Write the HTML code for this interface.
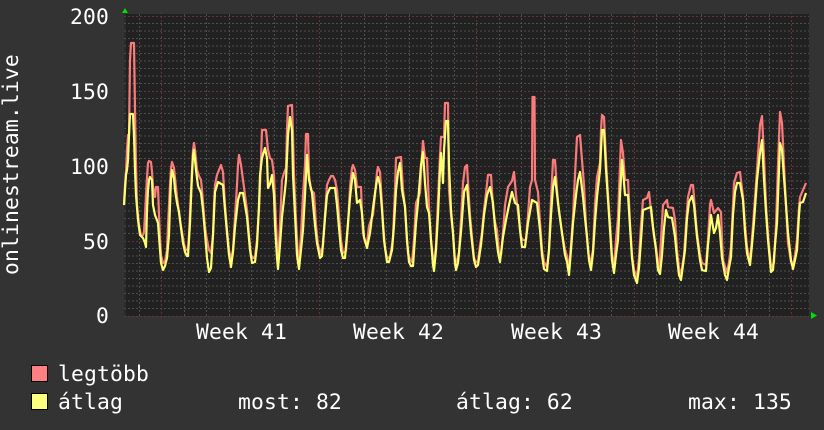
<!DOCTYPE html>
<html><head><meta charset="utf-8"><style>
html,body{margin:0;padding:0;background:#333;width:824px;height:430px;overflow:hidden}
svg{display:block}
text{font-family:"DejaVu Sans Mono","Liberation Mono",monospace;font-size:21.33px;fill:#fff;letter-spacing:.15px}
</style></head><body>
<svg width="824" height="430" viewBox="0 0 824 430" xmlns="http://www.w3.org/2000/svg">
<rect width="824" height="430" fill="#333"/>
<rect x="124" y="14" width="685" height="302" fill="#212121"/>
<rect x="124" y="14" width="2" height="302" fill="#2b2b2b"/>
<g stroke="#4e4e4e" stroke-width="1" stroke-dasharray="2 2" fill="none" shape-rendering="crispEdges">
<path d="M124 23.5H809M124 31H809M124 38.5H809M124 46H809M124 53.5H809M124 61H809M124 68.5H809M124 76H809M124 83.5H809M124 98.5H809M124 106H809M124 113.5H809M124 121H809M124 128.5H809M124 136H809M124 143.5H809M124 151H809M124 158.5H809M124 173.5H809M124 181H809M124 188.5H809M124 196H809M124 203.5H809M124 211H809M124 218.5H809M124 226H809M124 233.5H809M124 248.5H809M124 256H809M124 263.5H809M124 271H809M124 278.5H809M124 286H809M124 293.5H809M124 301H809M124 308.5H809"/>
<path d="M139.5 14V316M184.5 14V316M206.5 14V316M229.5 14V316M251.5 14V316M274.5 14V316M296.5 14V316M341.5 14V316M364.5 14V316M386.5 14V316M409.5 14V316M431.5 14V316M454.5 14V316M499.5 14V316M521.5 14V316M544.5 14V316M566.5 14V316M589.5 14V316M611.5 14V316M656.5 14V316M679.5 14V316M701.5 14V316M724.5 14V316M746.5 14V316M769.5 14V316"/>
</g>
<g stroke="#603636" stroke-width="1" stroke-dasharray="2 2" fill="none" shape-rendering="crispEdges">
<path d="M124 16.5H809M124 91.5H809M124 166.5H809M124 241.5H809M124 316.5H809"/>
<path d="M161.5 12V320M319.5 12V320M476.5 12V320M634.5 12V320M791.5 12V320"/>
</g>
<polyline fill="none" stroke="#f97b7b" stroke-width="2.2" stroke-linejoin="round" points="124,205 125,185 126,172 127,150 128,135 129,135 130,60 131,43 134,43 135,110 136,165 137,205 139,225 141,236 143,235 144,232 145,215 146,195 147,178 148,163 149,161 151,162 152,172 153,187 154,192 155,197 156,187 158,187 159,215 160,238 161,255 163,263 165,262 167,250 168,225 170,185 171,168 172,162 174,168 175,178 177,197 178,205 180,220 182,232 184,244 186,250 188,250 189,235 190,213 192,170 193,150 194,143 195,150 197,170 199,176 201,180 202,190 204,215 205,227 207,240 209,250 211,253 213,235 214,205 215,185 217,175 219,170 221,165 223,172 225,205 227,230 229,250 231,260 233,250 235,217 237,185 238,165 239,155 241,165 243,180 245,195 247,210 249,235 251,255 253,258 255,257 257,240 259,210 261,160 262,130 266,130 268,150 270,158 272,160 274,175 275,200 277,245 278,263 280,225 282,180 284,173 286,168 287,130 288,106 292,105 293,135 294,175 296,220 298,258 299,263 301,235 303,195 305,165 306,134 308,134 309,175 311,190 314,193 316,225 318,245 321,254 323,245 325,215 327,185 329,180 331,176 333,176 335,180 337,190 339,215 341,240 343,253 346,251 348,225 350,187 352,168 353,165 355,170 357,187 361,187 362,215 363,233 365,242 367,243 369,226 371,220 373,215 375,195 377,172 378,167 380,172 382,205 383,223 385,248 387,258 390,257 392,245 393,237 395,190 396,158 401,157 403,190 405,207 407,240 408,253 410,260 412,262 414,240 416,203 420,193 422,155 423,141 425,158 427,158 429,207 431,240 434,267 436,245 438,200 440,155 441,137 444,137 445,103 448,103 449,190 451,215 453,233 455,265 457,260 459,253 461,220 463,183 465,167 467,165 468,183 470,215 472,237 474,258 476,262 478,262 480,245 482,233 484,210 486,193 488,175 491,175 493,207 495,222 497,230 499,253 501,255 503,233 505,205 508,187 512,181 514,172 516,195 518,212 521,237 523,240 526,240 528,215 530,187 532,180 532.5,97 534.5,97 535,180 538,192 540,222 542,250 544,262 547,267 549,250 551,200 553,160 555,160 557,190 559,212 562,233 565,250 567,256 569,270 571,245 573,217 575,175 577,137 580,135 582,160 584,185 586,225 588,250 590,265 593,250 595,205 597,177 600,163 601,130 602,115 604,117 606,160 608,195 610,223 612,255 614,267 616,240 618,217 620,165 621,140 623,153 625,180 628,180 630,223 632,255 634,270 637,277 639,258 641,225 643,200 647,198 649,192 652,220 654,236 656,247 659,272 661,240 663,205 667,200 668,207 673,208 675,220 677,250 679,268 681,275 684,255 686,225 688,197 691,185 693,185 695,210 697,233 700,255 702,263 706,265 708,240 710,205 711,200 714,213 718,208 721,212 722,240 723,260 727,273 729,262 731,247 733,205 734,183 737,173 740,172 743,197 745,225 747,247 750,262 752,238 754,212 757,170 760,125 762,116 764,157 766,205 768,235 771,267 774,263 776,225 778,165 780,112 782,123 784,165 786,205 788,243 791,262 793,267 795,255 797,240 799,208 800,197 803,190 806,183"/>
<polyline fill="none" stroke="#ffff72" stroke-width="2.2" stroke-linejoin="round" points="124,205 125,190 126,175 127,170 128,160 129,135 130,114 133,114 134,135 135,170 136,195 138,220 140,235 143,238 145,243 146,247 147,210 148,190 149,180 150,177 152,180 153,205 155,215 158,223 160,250 161,263 163,270 165,266 167,258 169,235 170,205 171,180 172,170 174,178 175,190 177,203 179,212 181,228 183,243 185,252 187,256 188,256 190,223 192,175 193,155 194,150 196,170 198,186 201,193 203,210 205,233 207,258 209,272 211,268 213,235 215,192 218,182 223,185 225,210 227,233 229,255 231,267 233,252 235,227 238,200 240,193 243,193 245,205 247,217 250,250 252,263 255,262 257,245 259,205 260,175 262,158 265,148 267,158 268,188 270,184 272,175 274,195 275,225 277,258 278,269 280,245 282,217 285,190 286,180 288,135 290,117 292,130 293,175 295,215 297,255 299,269 301,250 303,230 305,195 307,155 309,180 312,193 315,225 317,243 320,258 322,256 325,218 327,195 330,188 335,188 337,205 339,228 341,250 343,258 345,258 348,223 350,198 352,180 353,173 355,180 357,203 360,200 362,213 364,237 367,248 370,233 373,208 375,193 377,180 378,177 380,185 382,210 384,240 387,262 389,262 392,250 394,225 396,190 398,172 400,163 402,190 405,207 407,240 409,262 411,266 413,266 416,223 418,203 421,165 423,152 425,183 427,207 429,213 431,240 433,265 434,271 436,250 438,215 440,170 441,153 443,183 444,150 446,121 448,121 449,165 451,210 453,233 455,262 456,270 458,263 461,232 464,192 467,185 469,210 471,233 474,260 476,267 478,265 481,245 484,215 487,195 490,187 493,203 495,227 498,252 500,262 503,237 506,220 509,205 512,192 515,203 518,205 520,230 522,247 525,247 528,223 532,200 537,203 540,230 542,255 544,269 547,271 549,250 551,215 553,187 555,177 558,203 562,233 565,255 567,262 569,275 571,250 573,223 576,195 578,180 580,172 583,197 585,218 587,237 589,260 591,270 593,253 595,222 597,197 600,170 601,150 602,130 604,130 606,170 608,200 610,230 612,260 614,273 616,255 618,240 620,195 622,160 623,170 625,195 628,195 630,227 632,258 634,275 637,283 639,268 641,240 643,210 651,207 653,227 656,250 658,270 660,274 662,255 664,228 666,210 668,217 672,218 675,237 677,258 679,275 681,280 683,265 685,250 687,218 689,202 692,196 694,205 697,237 700,260 702,270 706,271 708,245 711,215 714,233 716,228 718,215 720,233 722,258 725,275 727,280 729,268 731,257 733,215 735,192 737,183 740,183 743,200 745,232 747,253 750,265 752,245 754,222 757,180 760,153 762,140 764,180 766,212 768,240 771,272 773,270 775,245 777,223 779,170 780,143 782,150 784,178 786,205 788,233 791,260 793,269 795,260 797,250 799,215 800,203 803,202 806,193"/>
<polygon points="125,8 122,13 128,13" fill="#00e000"/>
<polygon points="811,312 817,315.5 811,319" fill="#00e000"/>
<text x="109" y="24" text-anchor="end">200</text>
<text x="109" y="99" text-anchor="end">150</text>
<text x="109" y="174" text-anchor="end">100</text>
<text x="109" y="249" text-anchor="end">50</text>
<text x="109" y="323" text-anchor="end">0</text>
<text x="196" y="339">Week 41</text>
<text x="353" y="339">Week 42</text>
<text x="511" y="339">Week 43</text>
<text x="668" y="339">Week 44</text>
<text transform="translate(18 275) rotate(-90)">onlinestream.live</text>
<rect x="31.5" y="365.5" width="16" height="16" fill="#ff8080" stroke="#000"/>
<rect x="31.5" y="393.5" width="16" height="16" fill="#ffff80" stroke="#000"/>
<text x="58" y="381">legtöbb</text>
<text x="58" y="409">átlag</text>
<text x="238" y="409">most: 82</text>
<text x="456" y="409">átlag: 62</text>
<text x="688" y="409">max: 135</text>
</svg>
</body></html>
